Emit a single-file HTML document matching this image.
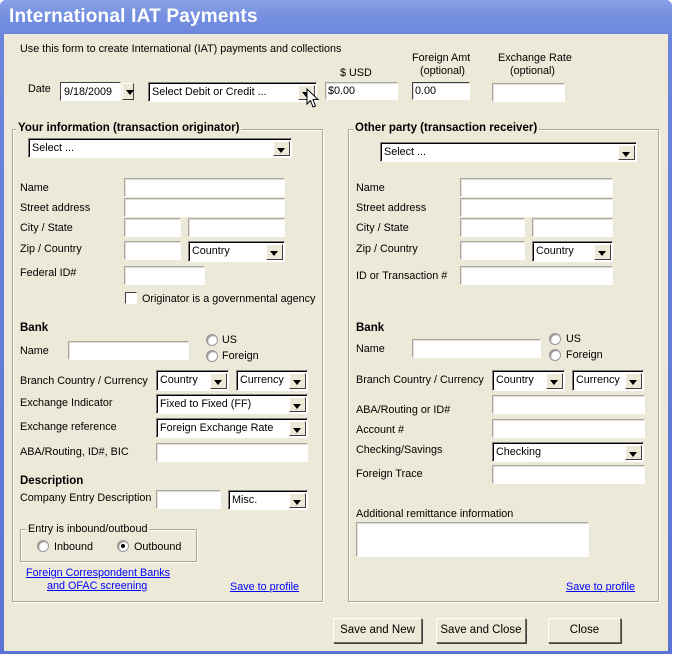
<!DOCTYPE html>
<html><head><meta charset="utf-8"><style>
*{box-sizing:border-box;margin:0;padding:0}
body{width:676px;height:656px;background:#fff;font-family:"Liberation Sans",sans-serif;font-size:10.8px;color:#000;position:relative;overflow:hidden}
.win{position:absolute;left:0;top:0;width:672px;height:654px;border-radius:6px 6px 0 0;background:linear-gradient(#6a86dc,#5a74d6)}
.title{position:absolute;left:0;top:0;width:672px;height:34px;background:linear-gradient(#8aa2e6,#7590e0 45%,#6e88de);border-radius:6px 6px 0 0}
.title span{position:absolute;left:9px;top:6px;color:#fff;font-weight:bold;font-size:19px;letter-spacing:0.2px}
.client{position:absolute;left:4px;top:34px;width:664px;height:617px;background:#ece9d8}
.a{position:absolute;white-space:nowrap}
.in{position:absolute;background:#fff;border:1px solid;border-color:#aca899 #fff #fff #aca899;box-shadow:inset 1px 1px 0 #ddd}
.sel{position:absolute;background:#fff;border:1px solid;border-color:#808080 #fff #fff #808080;box-shadow:inset 1px 1px 0 #000;padding:1px 0 0 3px;line-height:16px}
.sel i{position:absolute;right:1px;top:2px;bottom:1px;width:17px;background:#ece9d8;border:1px solid;border-color:#fff #404040 #404040 #fff}
.sel i:after{content:"";position:absolute;left:3px;top:6px;border-left:4.5px solid transparent;border-right:4.5px solid transparent;border-top:5px solid #000}
.grp{position:absolute;border:1px solid #aca899;box-shadow:1px 1px 0 #fff inset,1px 1px 0 #fff}
.lg{position:absolute;background:#ece9d8;padding:0 2px;font-weight:bold;font-size:11.5px}
.b{font-weight:bold;font-size:11.5px}
.rad{position:absolute;width:12px;height:12px;border-radius:50%;background:#fff;border:1px solid #999;box-shadow:inset 1px 1px 1px #888}
.chk{position:absolute;width:12px;height:12px;background:#fff;border:1px solid;border-color:#404040 #fff #fff #404040}
.lnk{position:absolute;color:#0000ff;text-decoration:underline;white-space:nowrap}
.btn{position:absolute;background:#ece9d8;border:1px solid;border-color:#fff #716f64 #716f64 #fff;box-shadow:1px 1px 0 #404040;text-align:center;line-height:23px;font-size:11.5px}
</style></head><body>
<div class="win"></div>
<div class="title"><span>International IAT Payments</span></div>
<div class="client"></div>

<div class="a" style="left:20px;top:43px">Use this form to create International (IAT) payments and collections</div>
<div class="a" style="left:28px;top:83px">Date</div>
<div class="sel" style="left:60px;top:82px;width:61px;height:19px;box-shadow:none;border-color:#404040 #fff #fff #404040">9/18/2009</div>
<div class="sel" style="left:121px;top:82px;width:13px;height:19px;border:none;box-shadow:none;background:none"><i style="right:0;width:12px;top:1px"></i></div>
<div class="sel" style="left:148px;top:82px;width:169px;height:20px">Select Debit or Credit ...<i></i></div>
<svg class="a" style="left:306px;top:88px" width="14" height="22"><path d="M1 1 L1 16 L4.5 12.5 L7 19 L9.5 18 L7 11.5 L12 11.5 Z" fill="#fff" stroke="#000" stroke-width="1"/></svg>
<div class="a" style="left:340px;top:67px">$ USD</div>
<div class="in" style="left:325px;top:82px;width:73px;height:18px;padding-left:2px;line-height:16px">$0.00</div>
<div class="a" style="left:412px;top:52px">Foreign Amt</div>
<div class="a" style="left:420px;top:65px">(optional)</div>
<div class="in" style="left:412px;top:82px;width:58px;height:18px;padding-left:2px;line-height:16px;border-color:#404040 #fff #fff #404040">0.00</div>
<div class="a" style="left:498px;top:52px">Exchange Rate</div>
<div class="a" style="left:510px;top:65px">(optional)</div>
<div class="in" style="left:492px;top:83px;width:73px;height:19px"></div>

<div class="grp" style="left:12px;top:129px;width:311px;height:473px"></div>
<div class="lg" style="left:16px;top:122px">Your information (transaction originator)</div>
<div class="sel" style="left:28px;top:138px;width:264px;height:20px">Select ...<i></i></div>
<div class="a" style="left:20px;top:182px">Name</div>
<div class="in" style="left:124px;top:178px;width:161px;height:19px"></div>
<div class="a" style="left:20px;top:202px">Street address</div>
<div class="in" style="left:124px;top:198px;width:161px;height:19px"></div>
<div class="a" style="left:20px;top:222px">City / State</div>
<div class="in" style="left:124px;top:218px;width:57px;height:19px"></div>
<div class="in" style="left:188px;top:218px;width:97px;height:19px"></div>
<div class="a" style="left:20px;top:243px">Zip / Country</div>
<div class="in" style="left:124px;top:241px;width:57px;height:19px"></div>
<div class="sel" style="left:188px;top:241px;width:97px;height:21px">Country<i></i></div>
<div class="a" style="left:20px;top:267px">Federal ID#</div>
<div class="in" style="left:124px;top:266px;width:81px;height:19px"></div>
<div class="chk" style="left:125px;top:292px"></div>
<div class="a" style="left:142px;top:293px">Originator is a governmental agency</div>
<div class="a b" style="left:20px;top:322px">Bank</div>
<div class="a" style="left:20px;top:345px">Name</div>
<div class="in" style="left:68px;top:341px;width:121px;height:19px"></div>
<div class="rad" style="left:206px;top:334px"></div><div class="a" style="left:222px;top:334px">US</div>
<div class="rad" style="left:206px;top:350px"></div><div class="a" style="left:222px;top:350px">Foreign</div>
<div class="a" style="left:20px;top:375px">Branch Country / Currency</div>
<div class="sel" style="left:156px;top:370px;width:73px;height:21px">Country<i></i></div>
<div class="sel" style="left:236px;top:370px;width:72px;height:21px">Currency<i></i></div>
<div class="a" style="left:20px;top:397px">Exchange Indicator</div>
<div class="sel" style="left:156px;top:394px;width:152px;height:20px">Fixed to Fixed (FF)<i></i></div>
<div class="a" style="left:20px;top:421px">Exchange reference</div>
<div class="sel" style="left:156px;top:418px;width:152px;height:20px">Foreign Exchange Rate<i></i></div>
<div class="a" style="left:20px;top:446px">ABA/Routing, ID#, BIC</div>
<div class="in" style="left:156px;top:443px;width:152px;height:19px"></div>
<div class="a b" style="left:20px;top:475px">Description</div>
<div class="a" style="left:20px;top:492px">Company Entry Description</div>
<div class="in" style="left:156px;top:490px;width:65px;height:19px"></div>
<div class="sel" style="left:228px;top:490px;width:80px;height:20px">Misc.<i></i></div>
<div class="grp" style="left:20px;top:529px;width:177px;height:33px"></div>
<div class="a" style="left:26px;top:523px;background:#ece9d8;padding:0 2px">Entry is inbound/outboud</div>
<div class="rad" style="left:37px;top:540px"></div><div class="a" style="left:54px;top:541px">Inbound</div>
<div class="rad" style="left:117px;top:540px"></div><div class="a" style="left:121px;top:544px;width:4px;height:4px;background:#000;border-radius:50%"></div><div class="a" style="left:134px;top:541px">Outbound</div>
<div class="lnk" style="left:26px;top:567px">Foreign Correspondent Banks</div>
<div class="lnk" style="left:47px;top:580px">and OFAC screening</div>
<div class="lnk" style="left:230px;top:581px">Save to profile</div>

<div class="grp" style="left:348px;top:129px;width:311px;height:473px"></div>
<div class="lg" style="left:353px;top:122px">Other party (transaction receiver)</div>
<div class="sel" style="left:380px;top:142px;width:257px;height:20px">Select ...<i></i></div>
<div class="a" style="left:356px;top:182px">Name</div>
<div class="in" style="left:460px;top:178px;width:153px;height:19px"></div>
<div class="a" style="left:356px;top:202px">Street address</div>
<div class="in" style="left:460px;top:198px;width:153px;height:19px"></div>
<div class="a" style="left:356px;top:222px">City / State</div>
<div class="in" style="left:460px;top:218px;width:65px;height:19px"></div>
<div class="in" style="left:532px;top:218px;width:81px;height:19px"></div>
<div class="a" style="left:356px;top:243px">Zip / Country</div>
<div class="in" style="left:460px;top:241px;width:65px;height:19px"></div>
<div class="sel" style="left:532px;top:241px;width:81px;height:21px">Country<i></i></div>
<div class="a" style="left:356px;top:270px">ID or Transaction #</div>
<div class="in" style="left:460px;top:266px;width:153px;height:19px"></div>
<div class="a b" style="left:356px;top:322px">Bank</div>
<div class="a" style="left:356px;top:343px">Name</div>
<div class="in" style="left:412px;top:339px;width:129px;height:19px"></div>
<div class="rad" style="left:549px;top:333px"></div><div class="a" style="left:566px;top:333px">US</div>
<div class="rad" style="left:549px;top:349px"></div><div class="a" style="left:566px;top:349px">Foreign</div>
<div class="a" style="left:356px;top:374px">Branch Country / Currency</div>
<div class="sel" style="left:492px;top:370px;width:73px;height:21px">Country<i></i></div>
<div class="sel" style="left:572px;top:370px;width:72px;height:21px">Currency<i></i></div>
<div class="a" style="left:356px;top:404px">ABA/Routing or ID#</div>
<div class="in" style="left:492px;top:395px;width:153px;height:19px"></div>
<div class="a" style="left:356px;top:424px">Account #</div>
<div class="in" style="left:492px;top:419px;width:153px;height:19px"></div>
<div class="a" style="left:356px;top:444px">Checking/Savings</div>
<div class="sel" style="left:492px;top:442px;width:152px;height:20px">Checking<i></i></div>
<div class="a" style="left:356px;top:468px">Foreign Trace</div>
<div class="in" style="left:492px;top:465px;width:153px;height:19px"></div>
<div class="a" style="left:356px;top:508px">Additional remittance information</div>
<div class="in" style="left:356px;top:522px;width:233px;height:35px"></div>
<div class="lnk" style="left:566px;top:581px">Save to profile</div>

<div class="btn" style="left:333px;top:618px;width:89px;height:25px">Save and New</div>
<div class="btn" style="left:436px;top:618px;width:90px;height:25px">Save and Close</div>
<div class="btn" style="left:548px;top:618px;width:73px;height:25px">Close</div>
</body></html>
